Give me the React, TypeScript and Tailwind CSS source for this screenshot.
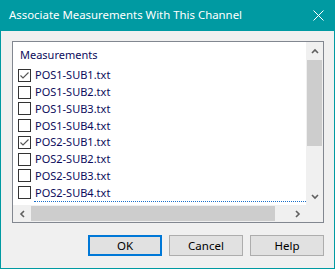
import React from "react";

const items: { name: string; checked: boolean }[] = [
  { name: "POS1-SUB1.txt", checked: true },
  { name: "POS1-SUB2.txt", checked: false },
  { name: "POS1-SUB3.txt", checked: false },
  { name: "POS1-SUB4.txt", checked: false },
  { name: "POS2-SUB1.txt", checked: true },
  { name: "POS2-SUB2.txt", checked: false },
  { name: "POS2-SUB3.txt", checked: false },
  { name: "POS2-SUB4.txt", checked: false },
];

const font = { fontFamily: '"Noto Sans", "Segoe UI", sans-serif' };

function CheckBox({ checked }: { checked: boolean }) {
  return (
    <div className="w-[13px] h-[13px] border border-[#333333] bg-white shrink-0 flex items-center justify-center">
      {checked && (
        <svg width="11" height="11" viewBox="0 0 11 11">
          <polyline points="1.5,5.5 4,8 9.5,2.5" fill="none" stroke="#555" strokeWidth="1.1" />
        </svg>
      )}
    </div>
  );
}

function Arrow({ dir }: { dir: "up" | "down" | "left" | "right" }) {
  const pts: Record<string, string> = {
    up: "1,5 4,2 7,5",
    down: "1,2 4,5 7,2",
    left: "5,1 2,4 5,7",
    right: "2,1 5,4 2,7",
  };
  const horiz = dir === "left" || dir === "right";
  return (
    <svg width={horiz ? 7 : 8} height={horiz ? 8 : 7} viewBox={horiz ? "0 0 7 8" : "0 0 8 7"}>
      <polyline points={pts[dir]} fill="none" stroke="#606060" strokeWidth="1.6" />
    </svg>
  );
}

export default function App() {
  return (
    <div className="w-[335px] h-[269px] bg-[#009aa2] flex flex-col" style={font}>
      <div className="h-[31px] shrink-0 flex items-center justify-between pl-[9px] pr-[11px] text-white text-[11.4px]">
        <span className="leading-none pb-[2px]">Associate Measurements With This Channel</span>
        <svg width="11" height="11" viewBox="0 0 11 11">
          <path d="M0.5 0.5 L10.5 10.5 M10.5 0.5 L0.5 10.5" stroke="white" strokeWidth="1" />
        </svg>
      </div>
      <div className="flex-1 mx-[1px] mb-[1px] bg-[#f0f0f0] flex flex-col pt-[10px] pl-[11px]">
        <div className="w-[312px] h-[182px] border border-[#828790] bg-white flex flex-col">
          <div className="flex flex-1 min-h-0">
            <div className="flex-1 relative overflow-hidden text-[11px] text-[#0c0c5c]">
              <div className="h-[17px] leading-[17px] mt-[4px] pl-[7px]">Measurements</div>
              <div className="mt-[4px]">
                {items.map((it) => (
                  <div key={it.name} className="h-[16.75px] flex items-center pl-[5px] gap-[4px]">
                    <CheckBox checked={it.checked} />
                    <span className="leading-[16px]">{it.name}</span>
                  </div>
                ))}
              </div>
              <div className="absolute left-[21px] right-0 top-[159px] border-t border-dotted border-[#1a6fc9]" />
            </div>
            <div className="w-[17px] bg-[#f0f0f0] flex flex-col">
              <div className="h-[17px] flex items-end justify-center pb-[4px]">
                <Arrow dir="up" />
              </div>
              <div className="flex-1 flex flex-col px-[1px]">
                <div className="h-[86px] mt-[1px] bg-[#cdcdcd]" />
              </div>
              <div className="h-[17px] flex items-center justify-center">
                <Arrow dir="down" />
              </div>
            </div>
          </div>
          <div className="h-[17px] flex">
            <div className="flex-1 bg-[#f0f0f0] flex">
              <div className="w-[18px] flex items-center justify-center">
                <Arrow dir="left" />
              </div>
              <div className="flex-1 flex py-[1px]">
                <div className="w-[244px] bg-[#cdcdcd]" />
              </div>
              <div className="w-[17px] flex items-center justify-center">
                <Arrow dir="right" />
              </div>
            </div>
            <div className="w-[17px] bg-[#f0f0f0]" />
          </div>
        </div>
        <div className="flex justify-end gap-[7px] pr-[10px] mt-[12px]">
          <button className="w-[74px] h-[21px] border-2 border-[#0078d7] bg-[#e1e1e1] text-[11.5px] text-black leading-none">
            OK
          </button>
          <button className="w-[74px] h-[21px] border border-[#adadad] bg-[#e1e1e1] text-[11.5px] text-black leading-none">
            Cancel
          </button>
          <button className="w-[74px] h-[21px] border border-[#adadad] bg-[#e1e1e1] text-[11.5px] text-black leading-none">
            Help
          </button>
        </div>
      </div>
    </div>
  );
}
